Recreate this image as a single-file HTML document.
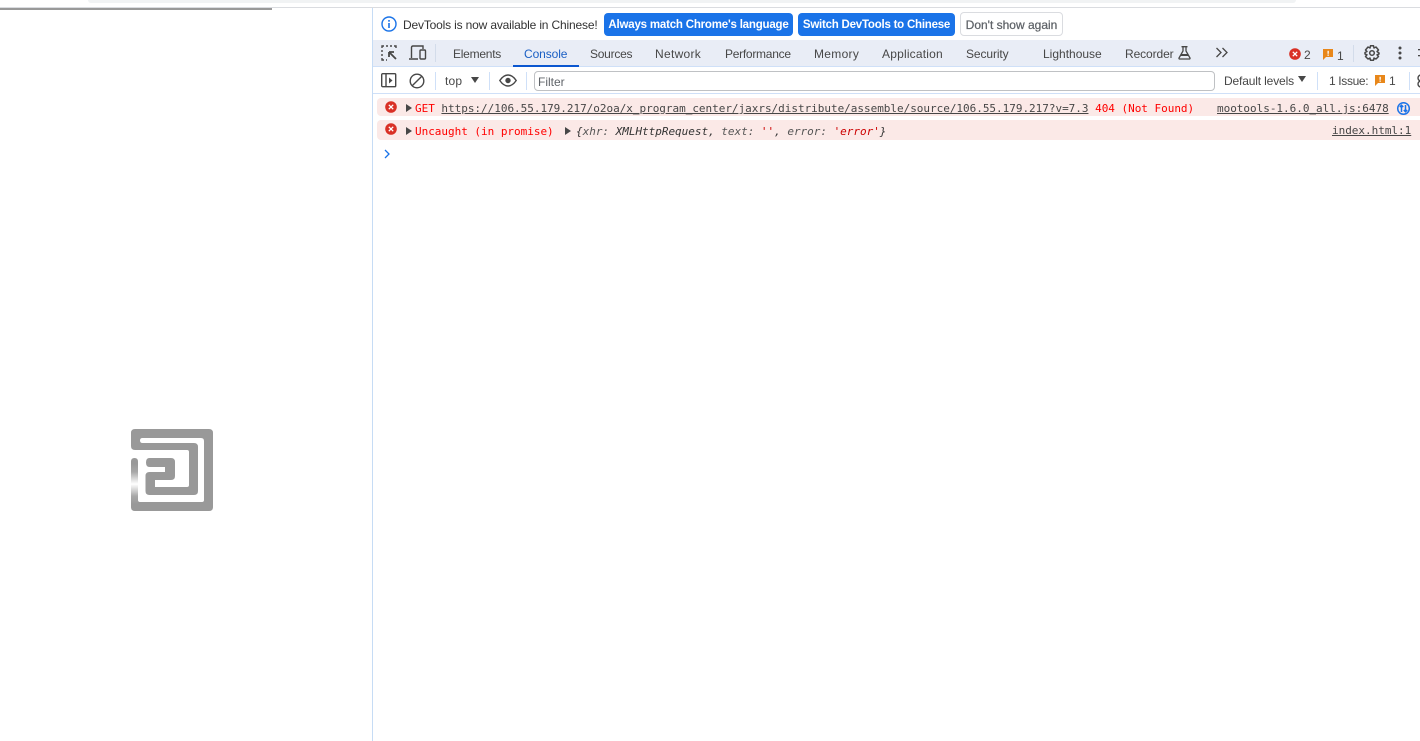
<!DOCTYPE html>
<html><head><meta charset="utf-8">
<style>
html,body{margin:0;padding:0;background:#fff;width:1420px;height:741px;overflow:hidden}
body{position:relative;font-family:"Liberation Sans",sans-serif;font-size:12px;color:#474747}
.a{position:absolute;white-space:nowrap}
.t{line-height:16px;font-size:12px;color:#474747}
.m{font-family:"DejaVu Sans Mono","Liberation Mono",monospace;font-size:11px;line-height:14px;letter-spacing:-.02px}
.r{color:#f00}
.u{text-decoration:underline;color:#474747}
.b{height:23px;top:13px;border-radius:4px;background:#1a73e8;color:#fff;font-weight:bold;font-size:11.5px;line-height:25px;text-align:center}
.tri{width:0;height:0;border-left:6px solid #474747;border-top:4px solid transparent;border-bottom:4px solid transparent}
svg{position:absolute;overflow:visible}
</style></head><body>
<div class="a" style="left:88px;top:0;width:1208px;height:3px;background:#f1f3f4;border-radius:0 0 8px 8px"></div>
<div class="a" style="left:0;top:7px;width:1420px;height:1px;background:#dadce0"></div>
<div class="a" style="left:0;top:8px;width:272px;height:2px;background:#999"></div>

<svg style="left:131px;top:429px" width="82" height="82" viewBox="0 0 82 82" fill="none">
<defs><linearGradient id="g" x1="0" y1="0" x2="0" y2="1"><stop offset="0" stop-color="#999"/><stop offset=".2" stop-color="#a8a8a8"/><stop offset=".5" stop-color="#fff"/><stop offset=".8" stop-color="#a8a8a8"/><stop offset="1" stop-color="#999"/></linearGradient></defs>
<path d="M4 0H78Q82 0 82 4V78Q82 82 78 82H4Q0 82 0 78V32.500Q0 29 3.500 29Q7 29 7 32.500V71Q7 73 9 73H71Q73 73 73 71V12Q73 9 70 9H11.500Q9 9 9 11.500Q9 14 11.500 14H63Q67 14 67 18V62Q67 66 63 66H18.500Q14.500 66 14.500 62V47Q14.500 43 18.500 43H34V38H18.500Q15 38 15 33.500Q15 29 18.500 29H40Q44 29 44 33V47Q44 51 40 51H24V58H56Q58 58 58 56V23Q58 21 56 21H4Q0 21 0 17V4Q0 0 4 0Z" fill="#999"/>
<rect x="0" y="35" width="7" height="40" fill="url(#g)"/>
</svg>

<div class="a" style="left:372px;top:8px;width:1px;height:733px;background:#c6dcf5"></div>
<!-- infobar -->
<svg style="left:381px;top:16px" width="16" height="16" viewBox="0 0 16 16" fill="none"><circle cx="8" cy="8" r="7" stroke="#1a73e8" stroke-width="1.400"/><rect x="7.200" y="7" width="1.600" height="5" fill="#1a73e8"/><rect x="7.200" y="4" width="1.600" height="1.700" fill="#1a73e8"/></svg>
<div class="a t" style="left:403px;top:17px;color:#333;letter-spacing:-.17px">DevTools is now available in Chinese!</div>
<div class="a b" style="left:604px;width:189px;letter-spacing:-.2px">Always match Chrome's language</div>
<div class="a b" style="left:798px;width:157px;letter-spacing:-.23px">Switch DevTools to Chinese</div>
<div class="a" style="left:960px;top:12px;width:101px;height:22px;border:1px solid #dadce0;border-radius:4px;text-align:center;line-height:24px;font-size:12px;color:#5f6368;-webkit-text-stroke:.25px #5f6368">Don't show again</div>

<!-- tabs -->
<div class="a" style="left:373px;top:40px;width:1047px;height:26px;background:#e9edf6"></div>
<div class="a" style="left:373px;top:66px;width:1047px;height:1px;background:#cfe0f8"></div>
<svg style="left:381px;top:45px" width="18" height="16" viewBox="0 0 18 16" fill="none" stroke="#474747" stroke-width="1.400"><path d="M1 3V1H3M5 1H7M9 1H11M13 1H15V3M1 5V7M1 9V11M1 13V15H3M5 15H6"/><path stroke-width="1.800" d="M8 7L15 14M8 7H13M8 7V12"/></svg>
<svg style="left:409px;top:45px" width="18" height="16" viewBox="0 0 18 16" fill="none" stroke="#474747" stroke-width="1.400"><path d="M2.500 13V2.500Q2.500 1 4 1H14V4M0 14H9"/><rect x="11" y="5" width="5.500" height="9" rx="1"/></svg>
<div class="a" style="left:435px;top:44px;width:1px;height:18px;background:#d3dcea"></div>
<div class="a t" style="left:453px;top:46px;letter-spacing:-.25px">Elements</div>
<div class="a t" style="left:524px;top:46px;color:#1a5fc4;letter-spacing:-.1px">Console</div>
<div class="a" style="left:513px;top:65px;width:66px;height:2px;background:#0b57d0"></div>
<div class="a t" style="left:590px;top:46px;letter-spacing:-.25px">Sources</div>
<div class="a t" style="left:655px;top:46px;letter-spacing:.3px">Network</div>
<div class="a t" style="left:725px;top:46px;letter-spacing:-.27px">Performance</div>
<div class="a t" style="left:814px;top:46px;letter-spacing:.3px">Memory</div>
<div class="a t" style="left:882px;top:46px;letter-spacing:.2px">Application</div>
<div class="a t" style="left:966px;top:46px;letter-spacing:-.1px">Security</div>
<div class="a t" style="left:1043px;top:46px">Lighthouse</div>
<div class="a t" style="left:1125px;top:46px;letter-spacing:-.1px">Recorder</div>
<svg style="left:1178px;top:46px" width="13" height="14" viewBox="0 0 13 14" fill="none" stroke="#474747" stroke-width="1.300"><path d="M3.500 .7H9.500M5 .7V5L1 12Q.7 13 2 13H11Q12.300 13 12 12L8 5V.7"/><path d="M3 9H10" stroke-width="2"/></svg>
<svg style="left:1215px;top:47px" width="14" height="12" viewBox="0 0 14 12" fill="none" stroke="#474747" stroke-width="1.300"><path d="M1.500 1L6 5.500L1.500 10M7.500 1L12 5.500L7.500 10"/></svg>
<svg style="left:1289px;top:48px" width="12" height="12" viewBox="0 0 12 12"><circle cx="6" cy="6" r="5.800" fill="#d93025"/><path d="M3.800 3.800L8.200 8.200M8.200 3.800L3.800 8.200" stroke="#fff" stroke-width="1.300"/></svg>
<div class="a t" style="left:1304px;top:47px">2</div>
<svg style="left:1323px;top:49px" width="11" height="11" viewBox="0 0 11 11"><path d="M0 0H10V8H3L0 11Z" fill="#e8871a"/><rect x="4.500" y="1.800" width="1.300" height="3" fill="#fff"/><rect x="4.500" y="5.500" width="1.300" height="1.300" fill="#fff"/></svg>
<div class="a t" style="left:1337px;top:48px">1</div>
<div class="a" style="left:1353px;top:45px;width:1px;height:17px;background:#d3dcea"></div>
<svg style="left:1364px;top:45px" width="16" height="16" viewBox="0 0 16 16" fill="none" stroke="#474747" stroke-width="1.500"><circle cx="8" cy="8" r="2.300"/><path d="M6.500 .8H9.500L10 3L12 2L14.500 5L13 6.500L15 8L15 9L13 9.800L14.500 11.500L12 14L10 13L9.500 15.200H6.500L6 13L4 14L1.500 11.500L3 9.800L1 9V7.500L3 6.500L1.500 5L4 2L6 3Z" stroke-linejoin="round"/></svg>
<svg style="left:1398px;top:46px" width="4" height="14" viewBox="0 0 4 14" fill="#474747"><circle cx="2" cy="2" r="1.500"/><circle cx="2" cy="7" r="1.500"/><circle cx="2" cy="12" r="1.500"/></svg>
<svg style="left:1418px;top:48px" width="2" height="10" viewBox="0 0 2 10" fill="#474747"><rect x="0" y="1" width="2" height="1.300"/><rect x="0" y="7" width="2" height="1.300"/></svg>

<!-- toolbar -->
<svg style="left:381px;top:73px" width="16" height="15" viewBox="0 0 16 15" fill="none" stroke="#474747" stroke-width="1.400"><rect x=".7" y=".7" width="14" height="13" rx="1"/><path d="M5 1V14"/><path d="M8 4.500L11.500 7.500L8 10.500Z" fill="#474747" stroke="none"/></svg>
<svg style="left:409px;top:73px" width="16" height="16" viewBox="0 0 16 16" fill="none" stroke="#474747" stroke-width="1.400"><circle cx="8" cy="8" r="6.800"/><path d="M3.200 12.800L12.800 3.200"/></svg>
<div class="a" style="left:435px;top:72px;width:1px;height:18px;background:#cfe0f8"></div>
<div class="a t" style="left:445px;top:73px;letter-spacing:.2px">top</div>
<div class="a" style="left:471px;top:77px;width:0;height:0;border-top:6px solid #474747;border-left:4.500px solid transparent;border-right:4.500px solid transparent"></div>
<div class="a" style="left:489px;top:72px;width:1px;height:18px;background:#cfe0f8"></div>
<svg style="left:499px;top:74px" width="18" height="13" viewBox="0 0 18 13" fill="none" stroke="#474747" stroke-width="1.400"><path d="M.8 6.500Q4.500 1 9 1Q13.500 1 17.200 6.500Q13.500 12 9 12Q4.500 12 .8 6.500Z"/><circle cx="9" cy="6.500" r="2.700" fill="#474747" stroke="none"/></svg>
<div class="a" style="left:526px;top:72px;width:1px;height:18px;background:#cfe0f8"></div>
<div class="a" style="left:534px;top:71px;width:679px;height:18px;border:1px solid #bfc1c4;border-radius:4px"></div>
<div class="a t" style="left:538px;top:74px;color:#5f6368">Filter</div>
<div class="a t" style="left:1224px;top:73px;letter-spacing:-.15px">Default levels</div>
<div class="a" style="left:1298px;top:76px;width:0;height:0;border-top:6px solid #474747;border-left:4.500px solid transparent;border-right:4.500px solid transparent"></div>
<div class="a" style="left:1317px;top:72px;width:1px;height:18px;background:#cfe0f8"></div>
<div class="a t" style="left:1329px;top:73px;letter-spacing:-.35px">1 Issue:</div>
<svg style="left:1375px;top:75px" width="11" height="11" viewBox="0 0 11 11"><path d="M0 0H10V8H3L0 11Z" fill="#e8871a"/><rect x="4.500" y="1.800" width="1.300" height="3" fill="#fff"/><rect x="4.500" y="5.500" width="1.300" height="1.300" fill="#fff"/></svg>
<div class="a t" style="left:1389px;top:73px">1</div>
<div class="a" style="left:1409px;top:72px;width:1px;height:18px;background:#cfe0f8"></div>
<svg style="left:1416px;top:74px" width="4" height="14" viewBox="0 0 4 14" fill="none" stroke="#474747" stroke-width="1.400"><circle cx="5" cy="4" r="3"/><circle cx="5" cy="10" r="3"/></svg>
<div class="a" style="left:373px;top:93px;width:1047px;height:1px;background:#cfe0f8"></div>

<!-- messages -->
<div class="a" style="left:377px;top:98px;width:1043px;height:18px;background:#fbe9e7;border-radius:4px 0 0 4px"></div>
<div class="a" style="left:377px;top:120px;width:1043px;height:20px;background:#fbe9e7;border-radius:4px 0 0 4px"></div>
<svg style="left:385px;top:101px" width="12" height="12" viewBox="0 0 12 12"><circle cx="6" cy="6" r="5.800" fill="#d93025"/><path d="M3.800 3.800L8.200 8.200M8.200 3.800L3.800 8.200" stroke="#fff" stroke-width="1.300"/></svg>
<svg style="left:385px;top:123px" width="12" height="12" viewBox="0 0 12 12"><circle cx="6" cy="6" r="5.800" fill="#d93025"/><path d="M3.800 3.800L8.200 8.200M8.200 3.800L3.800 8.200" stroke="#fff" stroke-width="1.300"/></svg>
<div class="a tri" style="left:406px;top:104px"></div>
<div class="a tri" style="left:406px;top:127px"></div>
<div class="a tri" style="left:565px;top:127px"></div>
<div class="a m r" style="left:415px;top:102px">GET <a class="u">https://106.55.179.217/o2oa/x_program_center/jaxrs/distribute/assemble/source/106.55.179.217?v=7.3</a> 404 (Not Found)</div>
<div class="a m u" style="left:1217px;top:102px">mootools-1.6.0_all.js:6478</div>
<svg style="left:1397px;top:102px" width="13" height="13" viewBox="0 0 13 13" fill="none" stroke="#1a73e8" stroke-width="1.500"><circle cx="6.500" cy="6.500" r="5.800"/><path d="M4.500 10V3.500M2.800 5L4.500 3.200L6.200 5M8.500 3V9.500M6.800 8L8.500 9.800L10.200 8"/></svg>
<div class="a m r" style="left:415px;top:125px">Uncaught (in promise)</div>
<div class="a m" style="left:576px;top:125px;font-style:italic;color:#333">{<span style="color:#555">xhr:</span> XMLHttpRequest, <span style="color:#555">text:</span> <span style="color:#c00">''</span>, <span style="color:#555">error:</span> <span style="color:#c00">'error'</span>}</div>
<div class="a m u" style="left:1332px;top:124px">index.html:1</div>
<svg style="left:384px;top:149px" width="8" height="10" viewBox="0 0 8 10" fill="none" stroke="#1a73e8" stroke-width="1.300"><path d="M1 1L5 5L1 9"/></svg>
</body></html>
